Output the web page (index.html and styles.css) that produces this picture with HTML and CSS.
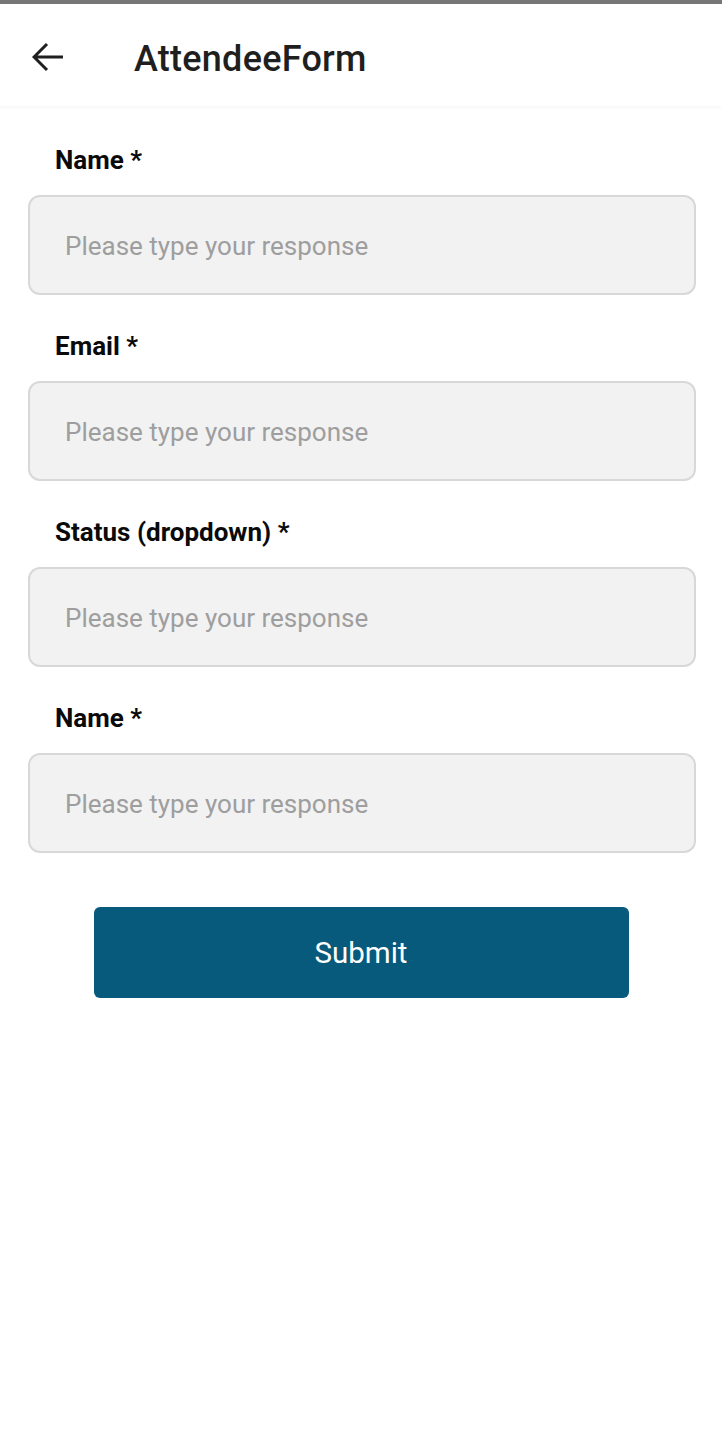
FILE: index.html
```html
<!DOCTYPE html>
<html>
<head>
<meta charset="utf-8">
<link rel="stylesheet" href="styles.css">
</head>
<body>
<div class="statusbar"></div>
<header class="appbar">
  <button class="back" aria-label="Back">
    <svg width="32" height="30" viewBox="0 0 32 30"><path d="M31 15H3M15 2L2 15l13 13" fill="none" stroke="#1f1f1f" stroke-width="3"/></svg>
  </button>
  <h1 class="title">AttendeeForm</h1>
</header>
<main class="form">
  <div class="field">
    <label class="label">Name *</label>
    <div class="input">Please type your response</div>
  </div>
  <div class="field">
    <label class="label">Email *</label>
    <div class="input">Please type your response</div>
  </div>
  <div class="field">
    <label class="label">Status (dropdown) *</label>
    <div class="input">Please type your response</div>
  </div>
  <div class="field">
    <label class="label">Name *</label>
    <div class="input">Please type your response</div>
  </div>
  <div class="actions">
    <button class="submit">Submit</button>
  </div>
</main>
</body>
</html>
```
FILE: styles.css
```css
* { box-sizing: border-box; }
html, body { margin: 0; padding: 0; background: #fff; }
body { font-family: Roboto, "Noto Sans", sans-serif; width: 722px; height: 1438px; overflow: hidden; }
.statusbar { height: 4px; background: #777; }
.appbar {
  height: 102px;
  display: flex;
  align-items: center;
  padding-left: 32px;
  background: #fff;
  box-shadow: 0 2px 3px rgba(0,0,0,0.03);
  position: relative;
}
.back { border: 0; background: none; padding: 0; width: 32px; height: 30px; display: flex; margin-top: 3px; }
.title { margin: 8px 0 0 70px; font-weight: 500; font-size: 36px; color: #1f1f1f; letter-spacing: 0.25px; }
.form { padding: 38px 26px 0 28px; display: flex; flex-direction: column; }
.field { display: flex; flex-direction: column; margin-bottom: 35px; }
.label { font-weight: 700; font-size: 26px; color: #0a0a0a; padding-left: 27px; line-height: 32px; margin-bottom: 19px; }
.input {
  height: 100px;
  border: 2px solid #d8d8d8;
  border-radius: 12px;
  background: #f2f2f2;
  color: #9e9e9e;
  font-size: 26px;
  padding-left: 35px;
  padding-top: 2px;
  display: flex;
  align-items: center;
}
.actions { display: flex; justify-content: center; padding-top: 19px; padding-right: 2px; }
.submit {
  width: 535px;
  height: 91px;
  border: 0;
  border-radius: 6px;
  background: #085a7c;
  color: #fff;
  font-family: Roboto, sans-serif;
  font-size: 29.5px;
}
```
